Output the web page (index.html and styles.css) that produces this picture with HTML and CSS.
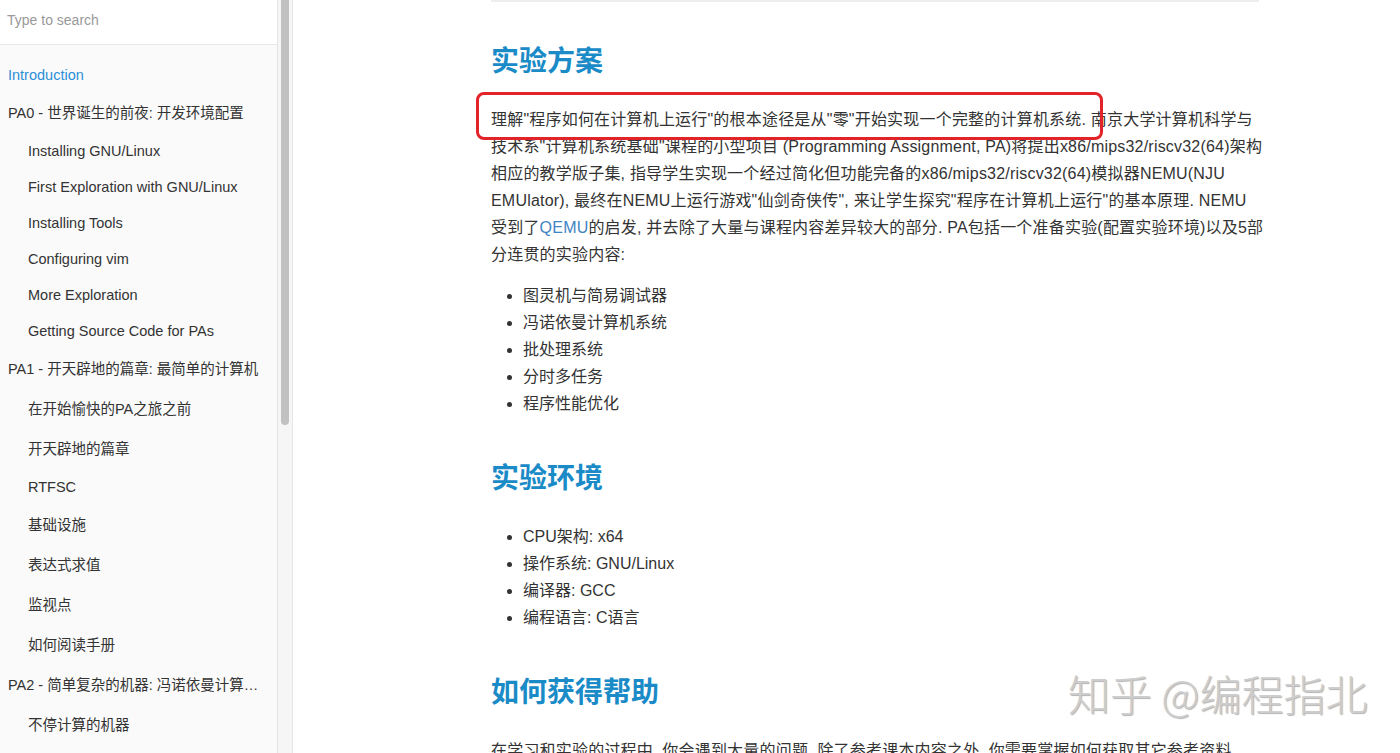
FILE: index.html
```html
<!DOCTYPE html>
<html lang="zh-CN">
<head>
    <meta charset="UTF-8">
    <meta name="viewport" content="width=device-width, initial-scale=1.0">
    <title>Introduction · NJU PA</title>
    <link rel="stylesheet" href="styles.css">
</head>
<body>

<aside class="book-summary">
    <div class="summary-pane">
        <div class="search-box">
            <input type="text" placeholder="Type to search">
        </div>
        <ul class="summary">
            <li class="chapter active"><a href="#">Introduction</a></li>
            <li class="chapter cjk"><a href="#">PA0 - 世界诞生的前夜: 开发环境配置</a></li>
            <li class="article"><a href="#">Installing GNU/Linux</a></li>
            <li class="article"><a href="#">First Exploration with GNU/Linux</a></li>
            <li class="article"><a href="#">Installing Tools</a></li>
            <li class="article"><a href="#">Configuring vim</a></li>
            <li class="article"><a href="#">More Exploration</a></li>
            <li class="article"><a href="#">Getting Source Code for PAs</a></li>
            <li class="chapter cjk"><a href="#">PA1 - 开天辟地的篇章: 最简单的计算机</a></li>
            <li class="article cjk"><a href="#">在开始愉快的PA之旅之前</a></li>
            <li class="article cjk"><a href="#">开天辟地的篇章</a></li>
            <li class="article"><a href="#">RTFSC</a></li>
            <li class="article cjk"><a href="#">基础设施</a></li>
            <li class="article cjk"><a href="#">表达式求值</a></li>
            <li class="article cjk"><a href="#">监视点</a></li>
            <li class="article cjk"><a href="#">如何阅读手册</a></li>
            <li class="chapter cjk"><a href="#">PA2 - 简单复杂的机器: 冯诺依曼计算机系统</a></li>
            <li class="article cjk"><a href="#">不停计算的机器</a></li>
            <li class="article cjk"><a href="#">程序, 运行时环境与AM</a></li>
        </ul>
    </div>
    <div class="scrollbar">
        <div class="thumb"></div>
    </div>
</aside>

<main class="book-body">
    <section class="page-inner">
        <hr>

        <h2 class="first">实验方案</h2>
        <p>理解"程序如何在计算机上运行"的根本途径是从"零"开始实现一个完整的计算机系统. 南京大学计算机科学与<br>技术系"计算机系统基础"课程的小型项目 (Programming Assignment, PA)将提出x86/mips32/riscv32(64)架构<br>相应的教学版子集, 指导学生实现一个经过简化但功能完备的x86/mips32/riscv32(64)模拟器NEMU(NJU<br>EMUlator), 最终在NEMU上运行游戏"仙剑奇侠传", 来让学生探究"程序在计算机上运行"的基本原理. NEMU<br>受到了<a href="#">QEMU</a>的启发, 并去除了大量与课程内容差异较大的部分. PA包括一个准备实验(配置实验环境)以及5部<br>分连贯的实验内容:</p>
        <ul>
            <li>图灵机与简易调试器</li>
            <li>冯诺依曼计算机系统</li>
            <li>批处理系统</li>
            <li>分时多任务</li>
            <li>程序性能优化</li>
        </ul>

        <h2>实验环境</h2>
        <ul>
            <li>CPU架构: x64</li>
            <li>操作系统: GNU/Linux</li>
            <li>编译器: GCC</li>
            <li>编程语言: C语言</li>
        </ul>

        <h2>如何获得帮助</h2>
        <p>在学习和实验的过程中, 你会遇到大量的问题. 除了参考课本内容之外, 你需要掌握如何获取其它参考资料.</p>

        <!-- annotation drawn on the screenshot -->
        <div class="highlight-box"></div>
    </section>
</main>

<div class="watermark">知乎 @编程指北</div>

</body>
</html>
```

FILE: styles.css
```css
html, body {
    height: 100%;
}

body {
    margin: 0;
    display: flex;
    overflow: hidden;
    font-family: "Liberation Sans", "Noto Sans CJK SC", sans-serif;
    color: #333;
    background-color: #fff;
}

/* sidebar */

.book-summary {
    display: flex;
    flex-shrink: 0;
    height: 100%;
}

.summary-pane {
    width: 278px;
    height: 100%;
    box-sizing: border-box;
    background-color: #fafafa;
    border-right: 1px solid #e4e4e4;
    overflow: hidden;
}

.search-box {
    background-color: #fff;
    border-bottom: 1px solid #e8e8e8;
    padding-bottom: 4px;
}

.search-box input {
    display: block;
    width: 100%;
    height: 40px;
    box-sizing: border-box;
    padding: 0 7px;
    border: none;
    outline: none;
    background: transparent;
    font-family: "Liberation Sans", sans-serif;
    font-size: 14px;
    color: #333;
}

.search-box input::placeholder {
    color: #999;
}

.summary {
    list-style: none;
    margin: 0;
    padding: 12px 0 0;
}

.summary a {
    display: block;
    padding: 10px 15px 10px 8px;
    line-height: 16px;
    font-size: 14.5px;
    color: #333;
    text-decoration: none;
    white-space: nowrap;
    overflow: hidden;
    text-overflow: ellipsis;
}

.summary .cjk a {
    padding-top: 12px;
    padding-bottom: 12px;
}

.summary .article a {
    padding-left: 28px;
}

.summary .active a {
    color: #2b8fd8;
}

.scrollbar {
    width: 15px;
    height: 100%;
    box-sizing: border-box;
    background-color: #f6f6f6;
    border-right: 1px solid #e6e6e6;
    padding-left: 3px;
}

.scrollbar .thumb {
    width: 8px;
    height: 425px;
    background-color: #c1c1c1;
    border-radius: 0 0 4px 4px;
}

/* content */

.book-body {
    flex: 1;
    height: 100%;
    overflow: hidden;
}

.page-inner {
    position: relative;
    width: 780px;
    margin-left: 198px;
}

.page-inner hr {
    width: 768px;
    height: 2px;
    margin: 0;
    border: none;
    background-color: #eee;
}

.page-inner h2 {
    margin: 45px 0 27px;
    font-size: 28px;
    line-height: 34px;
    font-weight: bold;
    color: #1a8bc7;
}

.page-inner h2.first {
    margin-top: 43px;
}

.page-inner p {
    margin: 0 0 14px;
    font-size: 16px;
    line-height: 27px;
    letter-spacing: 0.2px;
}

.page-inner ul {
    margin: 0 0 14px;
    padding-left: 32px;
    font-size: 16px;
    line-height: 27px;
}

.page-inner a {
    color: #4183c4;
    text-decoration: none;
}

.highlight-box {
    position: absolute;
    left: -15px;
    top: 92px;
    width: 627px;
    height: 48px;
    box-sizing: border-box;
    border: 3px solid #e3232a;
    border-radius: 8px;
}

.watermark {
    position: absolute;
    left: 1068px;
    top: 672px;
    font-family: "Noto Sans CJK SC", sans-serif;
    font-size: 42px;
    font-weight: 300;
    line-height: 42px;
    color: #cdcdcd;
    text-shadow: 1px 1px 1px rgba(0, 0, 0, 0.3);
    white-space: nowrap;
}
```
